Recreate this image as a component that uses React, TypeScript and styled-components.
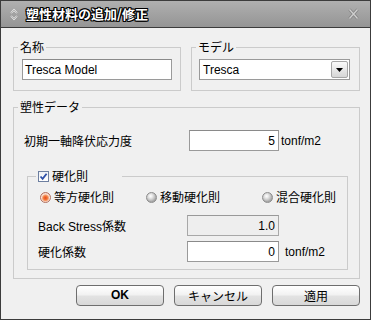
import React from 'react';
import styled, { createGlobalStyle } from 'styled-components';

const Global = createGlobalStyle`
  html, body { margin: 0; padding: 0; background: #f0f0f0; }
  body {
    font-family: "Liberation Sans", "Noto Sans CJK JP", sans-serif;
    font-size: 12px;
    color: #000;
  }
  * { box-sizing: border-box; }
`;

const Window = styled.div`
  width: 371px;
  height: 320px;
  display: flex;
  flex-direction: column;
  border: 1px solid #3c3c3c;
  background: #f0f0f0;
`;

const TitleBar = styled.div`
  height: 27px;
  flex: none;
  display: flex;
  align-items: center;
  padding: 0 11px 0 9px;
  background: linear-gradient(#b0b0b0, #a2a2a2 50%, #959595);
  border-bottom: 1px solid #3c3c3c;
`;

const Title = styled.div`
  margin-left: 8px;
  flex: 1;
  font-family: "Noto Sans CJK JP", sans-serif;
  font-weight: 700;
  font-size: 13px;
  color: #fff;
  line-height: 16px;
  text-shadow: 1px 0 0 #000, -1px 0 0 #000, 0 1px 0 #000, 0 -1px 0 #000,
    1px 1px 0 #000, -1px -1px 0 #000, 1px -1px 0 #000, -1px 1px 0 #000;
`;

const Body = styled.div`
  flex: 1;
  display: flex;
  flex-direction: column;
  padding: 12px 10px 0 12px;
`;

const TopRow = styled.div`
  display: grid;
  grid-template-columns: 168px 169px;
  column-gap: 10px;
`;

const Group = styled.fieldset<{ $pad: string; $mt?: number; $ml?: number }>`
  margin: ${(p) => p.$mt ?? 0}px 0 0 ${(p) => p.$ml ?? 0}px;
  padding: ${(p) => p.$pad};
  border: 1px solid #cbcbcb;
  min-width: 0;
`;

const Legend = styled.legend<{ $w?: number; $ml: number }>`
  margin-left: ${(p) => p.$ml}px;
  padding: 0 2px;
  line-height: 14px;
  height: 14px;
  font-family: "Noto Sans CJK JP", sans-serif;
  font-size: 12px;
  ${(p) => (p.$w ? `width: ${p.$w}px;` : '')}
  display: flex;
  align-items: center;
`;

const TextBox = styled.div<{ $align?: string; $disabled?: boolean }>`
  height: 21px;
  display: flex;
  align-items: center;
  justify-content: ${(p) => (p.$align === 'right' ? 'flex-end' : 'flex-start')};
  padding: 0 3px 0 2px;
  background: ${(p) => (p.$disabled ? '#eeeeee' : '#fff')};
  border: 1px solid ${(p) => (p.$disabled ? '#a8a8a8' : '#9a9a9a')};
  border-top-color: ${(p) => (p.$disabled ? '#999' : '#8a8a8a')};
  font-family: "Liberation Sans", sans-serif;
  font-size: 12px;
`;

const Combo = styled.div`
  height: 21px;
  display: flex;
  align-items: center;
  background: #fff;
  border: 1px solid #9a9a9a;
  padding: 1px 1px 1px 3px;
`;

const ComboText = styled.span`
  flex: 1;
  font-family: "Liberation Sans", sans-serif;
`;

const DropBtn = styled.div`
  width: 17px;
  height: 17px;
  display: flex;
  align-items: center;
  justify-content: center;
  border: 1px solid #a6a6a6;
  border-radius: 2px;
  background: linear-gradient(#fafafa, #e8e8e8 50%, #d6d6d6);
`;

const FieldRow = styled.div<{ $cols: string; $gap: number; $mt?: number }>`
  display: grid;
  grid-template-columns: ${(p) => p.$cols};
  column-gap: ${(p) => p.$gap}px;
  align-items: center;
  margin-top: ${(p) => p.$mt ?? 0}px;
`;

const Label = styled.span`
  font-family: "Liberation Sans", "Noto Sans CJK JP", sans-serif;
  font-size: 12px;
  white-space: nowrap;
`;

const Unit = styled.span`
  font-family: "Liberation Sans", sans-serif;
  font-size: 12px;
`;

const Check = styled.span`
  width: 11px;
  height: 11px;
  margin-right: 3px;
  border: 1px solid #6d7fa0;
  background: linear-gradient(#eef1f6, #fff);
  display: inline-flex;
  align-items: center;
  justify-content: center;
`;

const RadioRow = styled.div`
  display: grid;
  grid-template-columns: 106px 116px auto;
  margin: 7px 0 0 2px;
  height: 14px;
  align-items: center;
`;

const RadioItem = styled.label`
  display: flex;
  align-items: center;
  gap: 3px;
  font-family: "Noto Sans CJK JP", sans-serif;
  font-size: 12px;
  line-height: 14px;
`;

const RadioDot = styled.span<{ $on?: boolean }>`
  width: 11px;
  height: 11px;
  border-radius: 50%;
  border: 1px solid ${(p) => (p.$on ? '#b07060' : '#8c8c8c')};
  background: ${(p) =>
    p.$on
      ? 'radial-gradient(circle at 50% 55%, #e8481c 0, #f27a3c 2px, #f6b08a 3.2px, #fde6da 4px, #f4d3c6 5px)'
      : 'radial-gradient(circle at 40% 35%, #ffffff 0, #e6e6e6 2px, #c4c4c4 4px, #a6a6a6 5.5px)'};
`;

const Fields = styled.div`
  display: flex;
  flex-direction: column;
  gap: 5px;
  margin-top: 11px;
`;

const Buttons = styled.div`
  display: flex;
  justify-content: flex-end;
  gap: 10px;
  margin-top: 6px;
`;

const Button = styled.button<{ $bold?: boolean }>`
  width: 88px;
  height: 21px;
  padding: 0;
  border: 1px solid #6e6e6e;
  border-radius: 4px;
  background: linear-gradient(#ffffff, #f2f2f2 45%, #e2e2e2 55%, #d8d8d8);
  font-family: ${(p) => (p.$bold ? '"Liberation Sans", sans-serif' : '"Noto Sans CJK JP", sans-serif')};
  font-weight: ${(p) => (p.$bold ? 700 : 400)};
  font-size: 12px;
  color: #000;
  line-height: 19px;
`;

const TitleIcon = () => (
  <svg width="8" height="13" viewBox="0 0 8 13">
    <path d="M1 5 L4 2 L7 5" fill="none" stroke="#f4f4f4" strokeWidth="1.6" />
    <path d="M1 8 L4 11 L7 8" fill="none" stroke="#f4f4f4" strokeWidth="1.6" />
    <path d="M1 5 L4 2 L7 5 M1 8 L4 11 L7 8" fill="none" stroke="#777" strokeWidth="0.5" />
  </svg>
);

const CloseIcon = () => (
  <svg width="11" height="12" viewBox="0 0 11 12">
    <path d="M1.5 1.5 L9.5 10.5 M9.5 1.5 L1.5 10.5" stroke="#858585" strokeWidth="3" />
    <path d="M1.5 1.5 L9.5 10.5 M9.5 1.5 L1.5 10.5" stroke="#cfcfcf" strokeWidth="1.3" />
  </svg>
);

export default function App() {
  return (
    <>
      <Global />
      <Window>
        <TitleBar>
          <TitleIcon />
          <Title>塑性材料の追加/修正</Title>
          <CloseIcon />
        </TitleBar>
        <Body>
          <TopRow>
            <Group $pad="5px 8px 10px 8px">
              <Legend $ml={-4}>名称</Legend>
              <TextBox>Tresca Model</TextBox>
            </Group>
            <Group $pad="5px 9px 10px 7px">
              <Legend $ml={-3}>モデル</Legend>
              <Combo>
                <ComboText>Tresca</ComboText>
                <DropBtn>
                  <svg width="7" height="4" viewBox="0 0 7 4">
                    <path d="M0 0 H7 L3.5 4 Z" fill="#000" />
                  </svg>
                </DropBtn>
              </Combo>
            </Group>
          </TopRow>
          <Group $pad="16px 11px 8px 10px" $mt={9}>
            <Legend $ml={-6}>塑性データ</Legend>
            <FieldRow $cols="163px 90px auto" $gap={2}>
              <Label>初期一軸降伏応力度</Label>
              <TextBox $align="right">5</TextBox>
              <Unit>tonf/m2</Unit>
            </FieldRow>
            <Group $pad="0 10px 7px 10px" $mt={18} $ml={3}>
              <Legend $w={86} $ml={-2}>
                <Check>
                  <svg width="9" height="9" viewBox="0 0 9 9">
                    <path d="M1.5 4.5 L3.6 6.8 L7.6 1.8" fill="none" stroke="#2c4fa8" strokeWidth="1.8" />
                  </svg>
                </Check>
                硬化則
              </Legend>
              <RadioRow>
                <RadioItem>
                  <RadioDot $on />
                  等方硬化則
                </RadioItem>
                <RadioItem>
                  <RadioDot />
                  移動硬化則
                </RadioItem>
                <RadioItem>
                  <RadioDot />
                  混合硬化則
                </RadioItem>
              </RadioRow>
              <Fields>
                <FieldRow $cols="143px 92px auto" $gap={6}>
                  <Label>Back Stress係数</Label>
                  <TextBox $align="right" $disabled>1.0</TextBox>
                  <span />
                </FieldRow>
                <FieldRow $cols="143px 92px auto" $gap={6}>
                  <Label>硬化係数</Label>
                  <TextBox $align="right">0</TextBox>
                  <Unit>tonf/m2</Unit>
                </FieldRow>
              </Fields>
            </Group>
          </Group>
          <Buttons>
            <Button $bold>OK</Button>
            <Button>キャンセル</Button>
            <Button>適用</Button>
          </Buttons>
        </Body>
      </Window>
    </>
  );
}
